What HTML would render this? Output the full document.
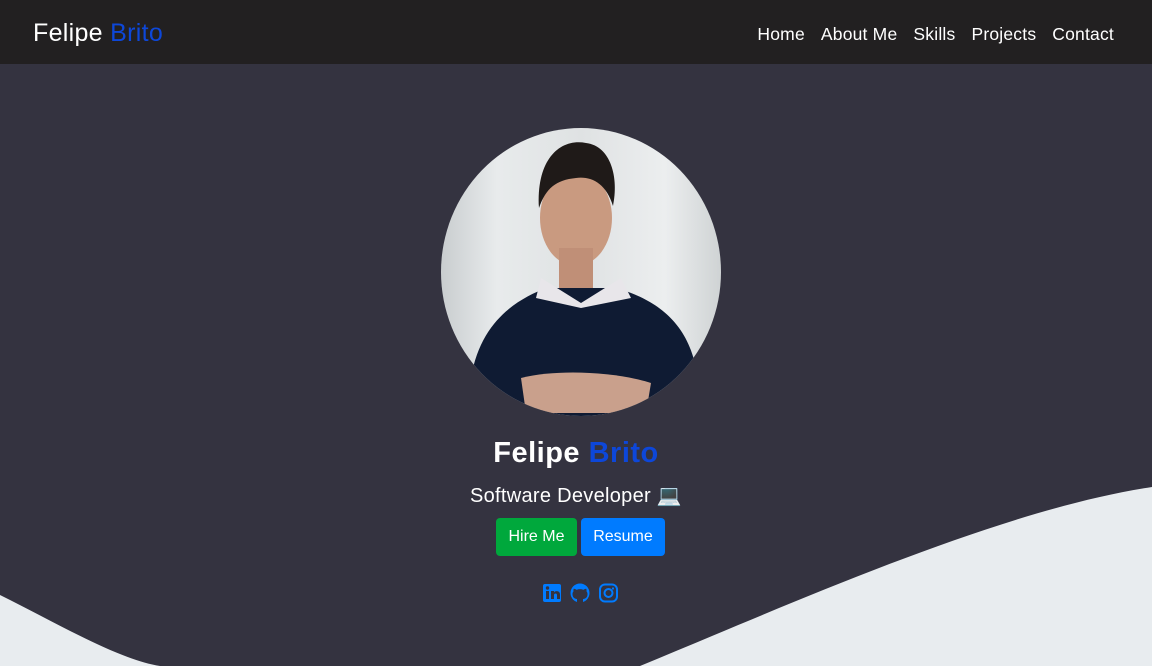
<!DOCTYPE html>
<html><head><style>
*{margin:0;padding:0;box-sizing:border-box}
body{width:1152px;height:666px;overflow:hidden;background:#343340;font-family:"Liberation Sans",sans-serif;position:relative}
nav{height:64px;background:#222021;position:relative}
.brand{position:absolute;left:33px;top:19px;font-size:25px;color:#fff;letter-spacing:0.3px}
.b{color:#0d47d9}
.links{position:absolute;right:38px;top:24px;font-size:17.5px;color:#fff;letter-spacing:0.2px}
.links span{margin-left:16px}
.photo{position:absolute;left:441px;top:128px;width:280px;height:288px;border-radius:50%;overflow:hidden;background:linear-gradient(90deg,#c9cdcf,#e8ebec 20%,#dfe2e3 50%,#eceeef 80%,#cfd3d4)}
h1{position:absolute;top:437px;width:100%;text-align:center;color:#fff;font-size:29px;font-weight:bold;left:0;letter-spacing:0.5px}
.sub{position:absolute;top:483px;left:0;width:100%;text-align:center;color:#fff;font-size:20px;letter-spacing:0.3px}
.btn{position:absolute;top:518px;height:38px;border-radius:4px;color:#fff;font-size:16px;line-height:38px;text-align:center}
</style></head><body>
<nav><div class="brand">Felipe <span class="b">Brito</span></div>
<div class="links"><span>Home</span><span>About Me</span><span>Skills</span><span>Projects</span><span>Contact</span></div></nav>
<svg style="position:absolute;left:0;top:0" width="1152" height="666"><path d="M0 595 C60 625 120 660 160 666 L640 666 C800 600 1000 510 1152 487 L1152 666 L0 666Z" fill="#e8ecef"/></svg>
<div class="photo"><svg width="280" height="288">
<path d="M30 250 C40 190 80 170 105 160 L175 160 C210 170 245 190 255 240 L265 288 L20 288Z" fill="#0f1b33"/>
<path d="M100 150 L140 175 L180 150 L190 170 L140 180 L95 170Z" fill="#e8e6ea"/>
<ellipse cx="135" cy="90" rx="36" ry="48" fill="#c99a80"/>
<path d="M98 80 C95 30 120 10 145 15 C170 18 178 50 172 78 C165 55 150 48 135 50 C115 52 105 60 98 80Z" fill="#1f1a18"/>
<rect x="118" y="120" width="34" height="40" fill="#c08f77"/>
<path d="M80 250 C120 240 180 245 210 255 L205 285 L85 285Z" fill="#c9a08c"/>
</svg></div>
<h1>Felipe <span class="b">Brito</span></h1>
<div class="sub">Software Developer 💻</div>
<div class="btn" style="left:496px;width:81px;background:#00a83c">Hire Me</div>
<div class="btn" style="left:581px;width:84px;background:#007bff">Resume</div>
<svg style="position:absolute;left:543px;top:583px" width="80" height="20" fill="#007bff">
<rect x="0" y="1" width="18" height="18" rx="2"/><rect x="3" y="8" width="3" height="8" fill="#343340"/><circle cx="4.5" cy="5" r="1.7" fill="#343340"/><path d="M8 8h3v1.5c1-2 6-2 6 2V16h-3v-4c0-2-3-2-3 0v4H8Z" fill="#343340"/>
<circle cx="37" cy="10" r="9.5"/><path d="M34 19.5v-3.5c-3-.3-4.5-2-4.5-5 0-1 .4-2 1-2.6-.2-.8-.1-1.8.3-2.6 1 0 2 .5 2.8 1.1a8.5 8.5 0 0 1 6.8 0c.8-.6 1.8-1.1 2.8-1.1.4.8.5 1.8.3 2.6.6.6 1 1.6 1 2.6 0 3-1.5 4.7-4.5 5v3.5Z" fill="#343340"/>
<rect x="57" y="1.5" width="17" height="17" rx="5" fill="none" stroke="#007bff" stroke-width="2"/><circle cx="65.5" cy="10" r="4" fill="none" stroke="#007bff" stroke-width="2"/><circle cx="70" cy="5.5" r="1.1"/>
</svg>
</body></html>
